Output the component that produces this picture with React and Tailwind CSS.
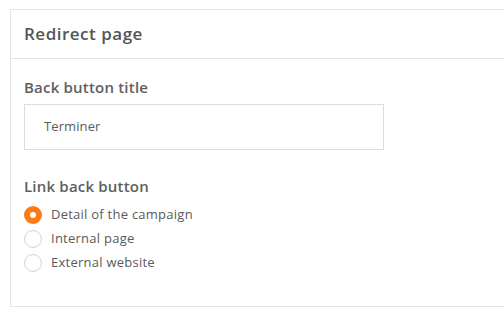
export default function App() {
  const options = ['Detail of the campaign', 'Internal page', 'External website']
  const selected = 0

  return (
    <div className="w-[504px] h-[323px] overflow-hidden bg-white pt-[9px] pl-[10px] font-['Open_Sans',sans-serif]">
      <div className="w-[520px] h-[298px] border border-[#e4e4e4] bg-white">
        <div className="h-[49px] flex items-center px-[13px] border-b border-[#e4e4e4]">
          <h2 className="text-[17px] font-semibold tracking-[0.5px] text-[#555555]">Redirect page</h2>
        </div>
        <div className="px-[13px] pt-[18px]">
          <label className="block text-[15px] font-semibold tracking-[0.2px] text-[#5e5e5e] leading-[20px]">Back button title</label>
          <div className="mt-[7px] w-[360px] h-[46px] border border-[#d6dde9] flex items-center pl-[19px]">
            <span className="text-[13px] tracking-[0.1px] text-[#5a5a5a]">Terminer</span>
          </div>
          <label className="block mt-[26px] text-[15px] font-semibold tracking-[0.2px] text-[#5e5e5e] leading-[20px]">Link back button</label>
          <div className="mt-[10px] flex flex-col gap-[6px]">
            {options.map((opt, i) => (
              <div key={opt} className="flex items-center h-[18px]">
                {i === selected ? (
                  <span className="w-[18px] h-[18px] rounded-full bg-[#ff7a12] flex items-center justify-center">
                    <span className="w-[6px] h-[6px] rounded-full bg-white"></span>
                  </span>
                ) : (
                  <span className="w-[18px] h-[18px] rounded-full border border-[#cdd4e0] bg-white"></span>
                )}
                <span className="ml-[9px] text-[13px] tracking-[0.25px] text-[#5a5a5a]">{opt}</span>
              </div>
            ))}
          </div>
        </div>
      </div>
    </div>
  )
}
